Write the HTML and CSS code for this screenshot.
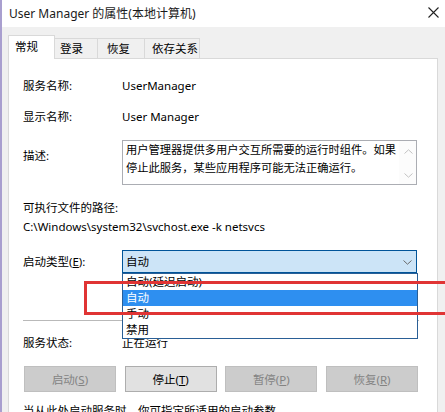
FILE: index.html
```html
<!DOCTYPE html>
<html lang="zh-CN">
<head>
<meta charset="utf-8">
<title>User Manager 的属性(本地计算机)</title>
<link rel="stylesheet" href="styles.css">
</head>
<body>
<div class="window">
  <div class="titlebar">
    <span class="title">User Manager 的属性(本地计算机)</span>
    <svg class="close" width="11" height="11" viewBox="0 0 11 11"><path d="M0.5 0.5L10.5 10.5M10.5 0.5L0.5 10.5" stroke="#222" stroke-width="1.1" fill="none"/></svg>
  </div>
  <div class="client">
    <div class="tabs">
      <div class="tab active t1">常规</div>
      <div class="tab t2">登录</div>
      <div class="tab t3">恢复</div>
      <div class="tab t4">依存关系</div>
    </div>
    <div class="panel">
      <div class="row r-name"><span class="label">服务名称:</span><span class="value">UserManager</span></div>
      <div class="row r-display"><span class="label">显示名称:</span><span class="value">User Manager</span></div>
      <div class="row r-desc">
        <span class="label desc-label">描述:</span>
        <div class="textbox">
          <div class="textbox-text">用户管理器提供多用户交互所需要的运行时组件。如果停止此服务，某些应用程序可能无法正确运行。</div>
          <div class="scrollbar">
            <svg width="9" height="5" viewBox="0 0 9 5"><path d="M0.5 4.5L4.5 0.8L8.5 4.5" stroke="#c2c2c2" fill="none"/></svg>
            <svg width="9" height="5" viewBox="0 0 9 5"><path d="M0.5 0.5L4.5 4.2L8.5 0.5" stroke="#c2c2c2" fill="none"/></svg>
          </div>
        </div>
      </div>
      <div class="line r-pathlabel">可执行文件的路径:</div>
      <div class="line r-path">C:\Windows\system32\svchost.exe -k netsvcs</div>
      <div class="row r-start">
        <span class="label">启动类型(<u>E</u>):</span>
        <div class="combo">
          <div class="combo-box">
            <span>自动</span>
            <svg width="9" height="5" viewBox="0 0 9 5"><path d="M0.5 0.5L4.5 4.2L8.5 0.5" stroke="#6a6a6a" fill="none"/></svg>
          </div>
          <ul class="combo-list">
            <li>自动(延迟启动)</li>
            <li class="selected">自动</li>
            <li>手动</li>
            <li>禁用</li>
          </ul>
        </div>
      </div>
      <div class="separator"></div>
      <div class="row r-status"><span class="label">服务状态:</span><span class="value">正在运行</span></div>
      <div class="buttons">
        <div class="btn disabled">启动(<u>S</u>)</div>
        <div class="btn">停止(<u>T</u>)</div>
        <div class="btn disabled">暂停(<u>P</u>)</div>
        <div class="btn disabled">恢复(<u>R</u>)</div>
      </div>
      <div class="line r-hint">当从此处启动服务时，你可指定所适用的启动参数。</div>
    </div>
  </div>
  <div class="callout"></div>
</div>
</body>
</html>
```
FILE: styles.css
```css
* { box-sizing: border-box; }
html, body {
  margin: 0;
  padding: 0;
  width: 445px;
  height: 412px;
  overflow: hidden;
  background: #f0f0f0;
}
body {
  font-family: "Noto Sans", "Noto Sans CJK SC", sans-serif;
  font-size: 11.5px;
  color: #000;
}
.window {
  position: relative;
  height: 412px;
  border-left: 2px solid #a99fcf;
  background: #f0f0f0;
  overflow: hidden;
}
.titlebar {
  height: 27px;
  background: #fff;
  display: flex;
  align-items: center;
  justify-content: space-between;
  padding: 0 7px 2px 7px;
}
.title {
  font-size: 12px;
  color: #1a1a1a;
}
.close { margin-right: -1px; }

.client { padding-top: 8px; }
.tabs {
  display: flex;
  align-items: flex-end;
  height: 23px;
  padding-left: 6px;
  position: relative;
  z-index: 2;
}
.tab {
  height: 20px;
  line-height: 19px;
  border: 1px solid #d9d9d9;
  border-bottom: none;
  background: #f0f0f0;
  margin-left: -1px;
}
.tab.active {
  height: 24px;
  line-height: 22px;
  background: #fff;
  margin-left: 0;
  margin-bottom: -1px;
}
.t1 { width: 47px; padding-left: 6px; }
.t2 { width: 44px; padding-left: 5px; }
.t3 { width: 48px; padding-left: 9px; }
.t4 { width: 56px; padding-left: 7px; }

.panel {
  margin-left: 6px;
  width: 430px;
  height: 400px;
  background: #fff;
  border: 1px solid #d9d9d9;
  padding-left: 14px;
  position: relative;
  z-index: 1;
}
.row {
  display: flex;
  align-items: center;
  line-height: 18px;
}
.label { width: 99px; flex: none; }
.r-name { margin-top: 18px; }
.r-display { margin-top: 13px; }
.r-desc { margin-top: 14px; align-items: flex-start; }
.desc-label { padding-top: 7px; }
.textbox {
  width: 295px;
  height: 45px;
  border: 1px solid #abadb3;
  display: flex;
}
.textbox-text {
  flex: 1;
  padding: 0 0 0 3px;
  line-height: 18px;
  font-size: 11.25px;
}
.scrollbar {
  width: 17px;
  flex: none;
  background: #fcfcfc;
  display: flex;
  flex-direction: column;
  justify-content: space-between;
  align-items: center;
  padding: 8px 0 6px 1px;
}
.scrollbar svg { display: block; }
.line { line-height: 18px; }
.r-pathlabel { margin-top: 14px; }
.r-path { margin-top: 1px; }
.r-start { margin-top: 14px; }
.combo {
  position: relative;
  width: 295px;
}
.combo-box {
  height: 23px;
  background: #cce4f7;
  border: 1px solid #005499;
  display: flex;
  align-items: center;
  justify-content: space-between;
  padding: 0 4px 0 3px;
}
.combo-box svg { margin-top: 1px; }
.combo-list {
  position: absolute;
  top: 23px;
  left: 0;
  width: 296px;
  margin: 0;
  padding: 0;
  list-style: none;
  background: #fff;
  border: 1px solid #2a5f96;
  z-index: 5;
}
.combo-list li {
  height: 16px;
  line-height: 16px;
  padding-left: 3px;
}
.combo-list li.selected {
  background: #2e8ff0;
  color: #fff;
}
.separator {
  margin-top: 47px;
  width: 396px;
  height: 1px;
  background: #b9b9b9;
}
.r-status { margin-top: 13px; }
.buttons {
  margin-top: 14px;
  margin-left: 1px;
  width: 394px;
  display: flex;
  justify-content: space-between;
}
.btn {
  width: 92px;
  height: 26px;
  border: 1px solid #adadad;
  background: #e1e1e1;
  display: flex;
  align-items: center;
  justify-content: center;
}
.btn.disabled {
  background: #cccccc;
  border-color: #bfbfbf;
  color: #838383;
}
.r-hint { margin-top: 10px; }

.callout {
  position: absolute;
  left: 82px;
  top: 281px;
  width: 420px;
  height: 34px;
  border: 3px solid #e03434;
  z-index: 10;
}
```
